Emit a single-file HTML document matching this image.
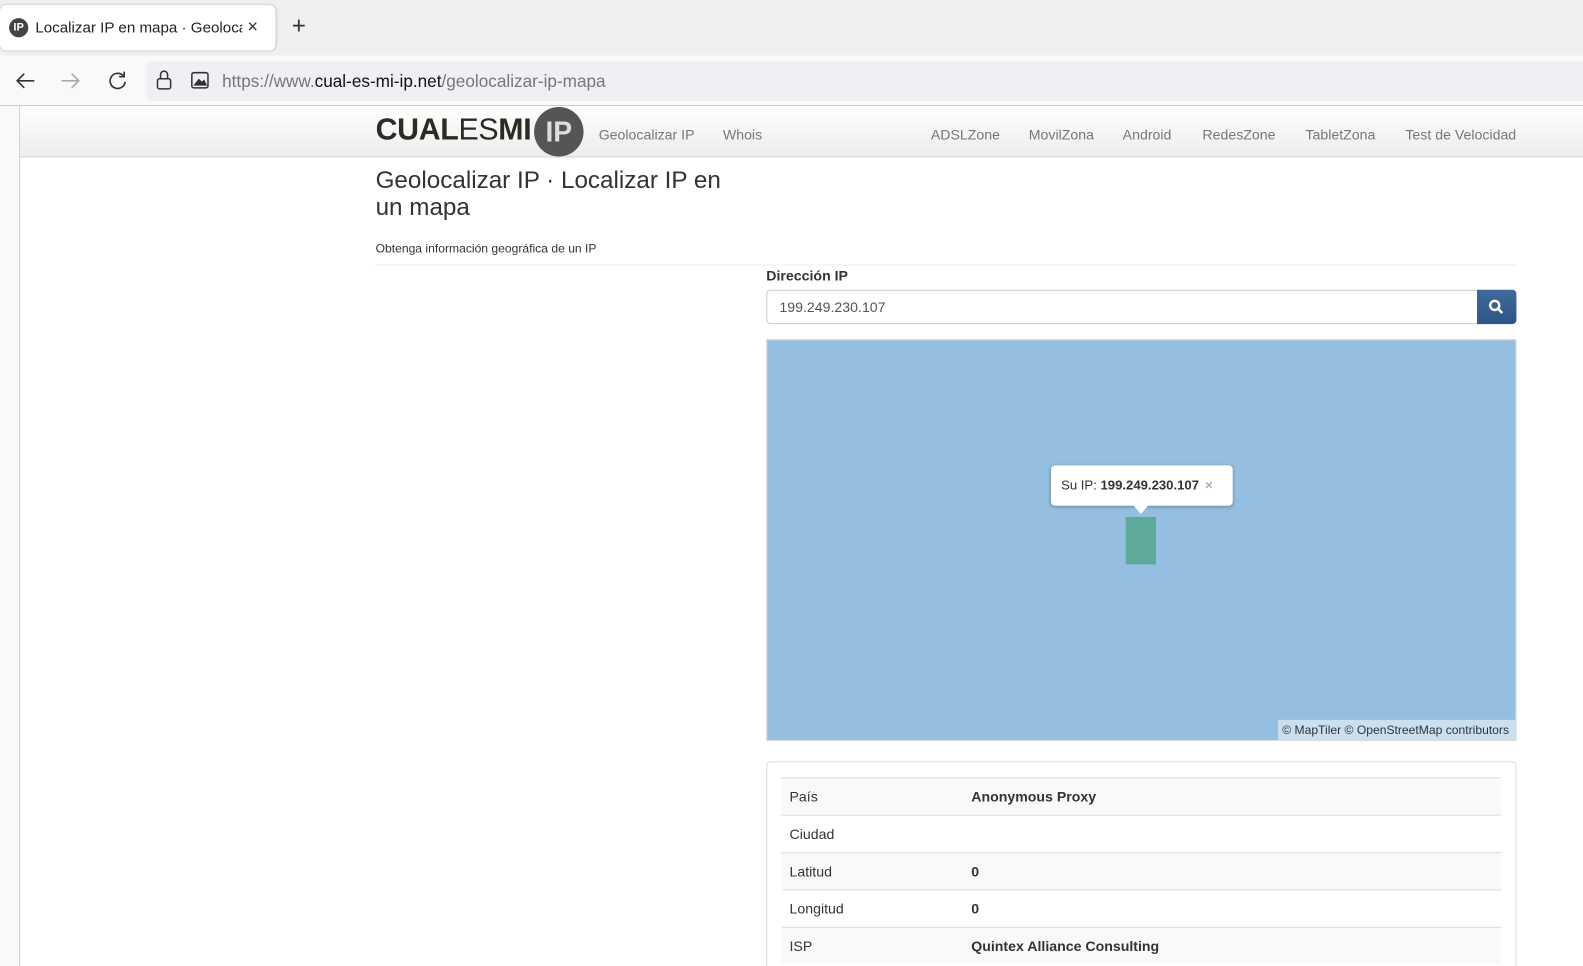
<!DOCTYPE html>
<html><head><meta charset="utf-8"><style>
*{box-sizing:border-box;margin:0;padding:0}
html,body{width:1583px;height:966px;overflow:hidden;background:#fff}
body{font-family:"Liberation Sans",Arial,sans-serif;position:relative}
#w{position:absolute;left:0;top:0;width:1568px;height:957px;transform:scale(1.0096);transform-origin:0 0}
.abs{position:absolute}
</style></head><body><div id="w">
<div class="abs" style="left:0;top:0;width:1568px;height:55px;background:#efefef"></div>
<div class="abs" style="left:0;top:5px;width:273px;height:45px;background:#fff;border-radius:6px;box-shadow:0 0 2px rgba(0,0,0,.3)"></div>
<div class="abs" style="left:9px;top:18px;width:19px;height:19px;border-radius:50%;background:#444;color:#fff;font-size:11px;font-weight:bold;text-align:center;line-height:19px">IP</div>
<div class="abs" style="left:35px;top:19px;font-size:15px;color:#222;width:205px;white-space:nowrap;overflow:hidden">Localizar IP en mapa · Geolocali</div>
<div class="abs" style="left:245px;top:16px;font-size:18px;color:#333">×</div>
<div class="abs" style="left:289px;top:12px;font-size:24px;color:#333;font-weight:300">+</div>
<div class="abs" style="left:0;top:55px;width:1568px;height:50px;background:#f9f9fb;border-bottom:1px solid #ccc"></div>
<div class="abs" style="left:145px;top:60px;width:1423px;height:40px;background:#f0f0f4;border-radius:6px 0 0 6px"></div>
<svg class="abs" style="left:14px;top:70px" width="120" height="22" fill="none" stroke-width="1.6">
<path d="M20 10H3M10 3L3 10l7 7" stroke="#333"/>
<path d="M47 10h17M57 3l7 7-7 7" stroke="#aaa"/>
<path d="M108 5a7.5 7.5 0 1 0 2 6M109 1v5h-5" stroke="#333"/>
</svg>
<svg class="abs" style="left:153px;top:68px" width="60" height="24" fill="none" stroke="#333" stroke-width="1.5">
<rect x="3" y="10" width="13" height="10" rx="2"/><path d="M6 10V6a3.5 3.5 0 0 1 7 0v4"/>
<rect x="37" y="4" width="16" height="15" rx="2"/><path d="M40 16l4-5 3 3 2-2 2 4z" fill="#333"/>
</svg>
<div class="abs" style="left:220px;top:71px;font-size:17px;color:#777">https://www.<span style="color:#111">cual-es-mi-ip.net</span>/geolocalizar-ip-mapa</div>
<div class="abs" style="left:0;top:105px;width:20px;height:861px;background:#f9f9fb;border-right:1px solid #ccc"></div>
<div class="abs" style="left:20px;top:106px;width:1548px;height:50px;background:linear-gradient(#fff,#ececec);border-bottom:1px solid #d5d5d5"></div>
<div class="abs" style="left:372px;top:112px;font-size:30px;font-weight:bold;color:#2b2b22;letter-spacing:-0.3px">CUAL<span style="font-weight:normal">ES</span>MI</div>
<div class="abs" style="left:529px;top:106px;width:49px;height:49px;border-radius:50%;background:#555;color:#ddd;font-size:28px;font-weight:bold;text-align:center;line-height:49px">IP</div>
<div class="abs" style="top:125px;left:0;font-size:14px;color:#777;width:1568px">
<span class="abs" style="left:593px">Geolocalizar IP</span>
<span class="abs" style="left:716px">Whois</span>
<span class="abs" style="left:922px">ADSLZone</span>
<span class="abs" style="left:1019px">MovilZona</span>
<span class="abs" style="left:1112px">Android</span>
<span class="abs" style="left:1191px">RedesZone</span>
<span class="abs" style="left:1293px">TabletZona</span>
<span class="abs" style="left:1392px">Test de Velocidad</span>
</div>
<div class="abs" style="left:372px;top:165px;font-size:24px;color:#333;line-height:27px">Geolocalizar IP · Localizar IP en<br>un mapa</div>
<div class="abs" style="left:372px;top:239px;font-size:12px;color:#333">Obtenga información geográfica de un IP</div>
<div class="abs" style="left:372px;top:262px;width:1130px;border-top:1px solid #eee"></div>
<div class="abs" style="left:759px;top:265px;font-size:14px;font-weight:bold;color:#333">Dirección IP</div>
<div class="abs" style="left:759px;top:287px;width:705px;height:34px;border:1px solid #ccc;border-radius:4px 0 0 4px;font-size:14px;color:#555;padding:8px 12px">199.249.230.107</div>
<div class="abs" style="left:1463px;top:287px;width:39px;height:34px;background:linear-gradient(#3d6a9c,#2d5686);border-radius:0 4px 4px 0"></div>
<svg class="abs" style="left:1474px;top:296px" width="16" height="16" fill="none" stroke="#fff" stroke-width="2.4"><circle cx="6.5" cy="6.5" r="4.5"/><path d="M10 10l4 4"/></svg>
<div class="abs" style="left:759px;top:336px;width:743px;height:398px;background:#94bfe0;border:1px solid #ddd"></div>
<div class="abs" style="left:1115px;top:512px;width:30px;height:47px;background:#5daa98"></div>
<div class="abs" style="left:1041px;top:461px;width:180px;height:40px;background:#fff;border-radius:4px;box-shadow:0 1px 3px rgba(0,0,0,.3);font-size:13px;color:#333;padding:12px 10px;white-space:nowrap">Su IP: <b>199.249.230.107</b><span style="color:#aaa;font-weight:bold;margin-left:6px">×</span></div>
<div class="abs" style="left:1122px;top:500px;width:0;height:0;border-left:8px solid transparent;border-right:8px solid transparent;border-top:9px solid #fff"></div>
<div class="abs" style="left:1266px;top:713px;width:235px;height:20px;background:rgba(255,255,255,.5);font-size:12px;color:#333;padding:3px 4px;white-space:nowrap">© MapTiler © OpenStreetMap contributors</div>
<div class="abs" style="left:759px;top:754px;width:743px;height:230px;border:1px solid #ddd;border-radius:4px"></div>
<div class="abs" style="left:774px;top:770px;width:713px;font-size:14px;color:#333">
<div style="height:37px;background:#f9f9f9;border-top:1px solid #ddd;padding:10px 8px;position:relative">País<b style="position:absolute;left:188px">Anonymous Proxy</b></div>
<div style="height:37px;border-top:1px solid #ddd;padding:10px 8px;position:relative">Ciudad</div>
<div style="height:37px;background:#f9f9f9;border-top:1px solid #ddd;padding:10px 8px;position:relative">Latitud<b style="position:absolute;left:188px">0</b></div>
<div style="height:37px;border-top:1px solid #ddd;padding:10px 8px;position:relative">Longitud<b style="position:absolute;left:188px">0</b></div>
<div style="height:37px;background:#f9f9f9;border-top:1px solid #ddd;padding:10px 8px;position:relative">ISP<b style="position:absolute;left:188px">Quintex Alliance Consulting</b></div>
</div>
</div></body></html>
